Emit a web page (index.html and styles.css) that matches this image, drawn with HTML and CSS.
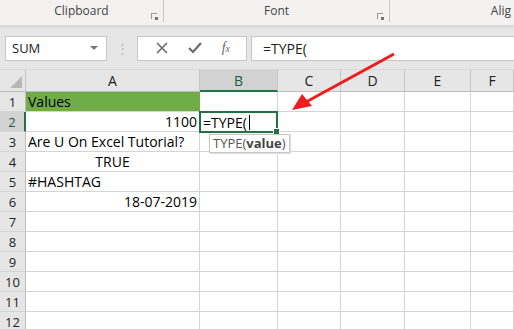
FILE: index.html
```html
<!DOCTYPE html>
<html lang="en">

<head>
    <meta charset="UTF-8">
    <title>TYPE function</title>
    <link rel="stylesheet" href="styles.css">
</head>

<body>
    <div class="ribbon">
        <div class="group group-clip">
            <span class="group-name">Clipboard</span>
            <span class="launcher"></span>
        </div>
        <div class="group group-font">
            <span class="group-name">Font</span>
            <span class="launcher"></span>
        </div>
        <div class="group group-align">
            <span class="group-name">Alig</span>
        </div>
    </div>

    <div class="fbar">
        <div class="namebox">
            <span>SUM</span>
            <span class="caret"></span>
        </div>
        <div class="dots">&#8942;</div>
        <div class="fbuttons">
            <svg width="12" height="12" viewBox="0 0 12 12"><path d="M1 1L11 11M11 1L1 11" stroke="#6a6a6a" stroke-width="1.6" fill="none"/></svg>
            <svg width="14" height="12" viewBox="0 0 14 12"><path d="M1 6L5 10L13 1" stroke="#6a6a6a" stroke-width="2.2" fill="none"/></svg>
            <span class="fx"><i>f</i><small>x</small></span>
        </div>
        <div class="finput">=TYPE(</div>
    </div>

    <div class="sheet">
        <div class="corner"><span class="tri"></span></div>
        <div class="colhead">A</div>
        <div class="colhead sel">B</div>
        <div class="colhead">C</div>
        <div class="colhead">D</div>
        <div class="colhead">E</div>
        <div class="colhead">F</div>

        <div class="rowhead">1</div>
        <div class="cell green">Values</div>
        <div class="cell"></div><div class="cell"></div><div class="cell"></div><div class="cell"></div><div class="cell"></div>

        <div class="rowhead sel">2</div>
        <div class="cell right">1100</div>
        <div class="cell active">=TYPE(<span class="cursor"></span><span class="handle"></span>
            <div class="tip">TYPE(<b>value</b>)</div>
        </div>
        <div class="cell"></div><div class="cell"></div><div class="cell"></div><div class="cell"></div>

        <div class="rowhead">3</div>
        <div class="cell">Are U On Excel Tutorial?</div>
        <div class="cell"></div><div class="cell"></div><div class="cell"></div><div class="cell"></div><div class="cell"></div>

        <div class="rowhead">4</div>
        <div class="cell center">TRUE</div>
        <div class="cell"></div><div class="cell"></div><div class="cell"></div><div class="cell"></div><div class="cell"></div>

        <div class="rowhead">5</div>
        <div class="cell">#HASHTAG</div>
        <div class="cell"></div><div class="cell"></div><div class="cell"></div><div class="cell"></div><div class="cell"></div>

        <div class="rowhead">6</div>
        <div class="cell right">18-07-2019</div>
        <div class="cell"></div><div class="cell"></div><div class="cell"></div><div class="cell"></div><div class="cell"></div>

        <div class="rowhead">7</div>
        <div class="cell"></div><div class="cell"></div><div class="cell"></div><div class="cell"></div><div class="cell"></div><div class="cell"></div>
        <div class="rowhead">8</div>
        <div class="cell"></div><div class="cell"></div><div class="cell"></div><div class="cell"></div><div class="cell"></div><div class="cell"></div>
        <div class="rowhead">9</div>
        <div class="cell"></div><div class="cell"></div><div class="cell"></div><div class="cell"></div><div class="cell"></div><div class="cell"></div>
        <div class="rowhead">10</div>
        <div class="cell"></div><div class="cell"></div><div class="cell"></div><div class="cell"></div><div class="cell"></div><div class="cell"></div>
        <div class="rowhead">11</div>
        <div class="cell"></div><div class="cell"></div><div class="cell"></div><div class="cell"></div><div class="cell"></div><div class="cell"></div>
        <div class="rowhead">12</div>
        <div class="cell"></div><div class="cell"></div><div class="cell"></div><div class="cell"></div><div class="cell"></div><div class="cell"></div>
    </div>

    <svg class="arrow" width="514" height="329" viewBox="0 0 514 329">
        <path d="M394 54L306 102" stroke="#ee1c1c" stroke-width="3" fill="none"/>
        <path d="M292 110L302 94L312 106Z" fill="#ee1c1c"/>
    </svg>
</body>

</html>
```

FILE: styles.css
```css
body {
    margin: 0;
    width: 514px;
    height: 329px;
    overflow: hidden;
    position: relative;
    background: #ffffff;
    font-family: "Open Sans", "Liberation Sans", sans-serif;
    color: #000;
}

.ribbon {
    height: 25px;
    background: #f3f2f1;
    display: flex;
    border-bottom: 1px solid #dadada;
    box-shadow: 0 1px 2px #d0d0d0;
    position: relative;
}

.group {
    position: relative;
    display: flex;
    justify-content: center;
    align-items: flex-end;
    padding-bottom: 3px;
    box-sizing: border-box;
    font-size: 12px;
    color: #444;
}

.group-clip {
    width: 164px;
    border-right: 1px solid #c8c8c8;
    height: 22px;
}

.group-font {
    width: 226px;
    border-right: 1px solid #c8c8c8;
    height: 22px;
}

.group-align {
    flex: 1;
    justify-content: flex-end;
    padding-right: 3px;
    height: 22px;
}

.launcher {
    position: absolute;
    right: 6px;
    bottom: 3px;
    width: 5px;
    height: 5px;
    border-left: 1px solid #999;
    border-top: 1px solid #999;
}

.launcher::after {
    content: "";
    position: absolute;
    right: -1px;
    bottom: -1px;
    width: 3px;
    height: 3px;
    background: #777;
}

.fbar {
    height: 43px;
    background: #e6e6e6;
    display: flex;
    align-items: center;
    padding: 0 0 0 5px;
    box-sizing: border-box;
    padding-top: 1px;
}

.namebox {
    width: 102px;
    height: 25px;
    box-sizing: border-box;
    background: #fff;
    border: 1px solid #c6c6c6;
    display: flex;
    align-items: center;
    justify-content: space-between;
    padding: 0 8px 0 6px;
    font-size: 13px;
    color: #222;
}

.caret {
    width: 0;
    height: 0;
    border-left: 4px solid transparent;
    border-right: 4px solid transparent;
    border-top: 4px solid #777;
}

.dots {
    width: 30px;
    text-align: center;
    color: #b8b8b8;
    font-size: 13px;
}

.fbuttons {
    width: 110px;
    height: 25px;
    box-sizing: border-box;
    background: #fff;
    border: 1px solid #c6c6c6;
    display: flex;
    align-items: center;
    justify-content: space-around;
    padding: 0 6px 0 8px;
}

.fx {
    font-family: "Liberation Serif", serif;
    color: #6a6a6a;
    font-size: 14px;
}

.fx small {
    font-size: 10px;
    font-style: italic;
}

.finput {
    flex: 1;
    margin-left: 4px;
    height: 25px;
    box-sizing: border-box;
    background: #fff;
    border: 1px solid #c6c6c6;
    border-right: none;
    display: flex;
    align-items: center;
    padding-left: 11px;
    font-size: 14px;
    color: #222;
}

.sheet {
    display: grid;
    grid-template-columns: 26px 174px 78px 63px 64px 66px 43px;
    grid-template-rows: 23px repeat(12, 20px);
    background: #fff;
}

.corner {
    background: #e6e6e6;
    border-top: 1px solid #d9d9d9;
    border-right: 1px solid #c6c6c6;
    border-bottom: 1px solid #bdbdbd;
    position: relative;
}

.tri {
    position: absolute;
    right: 3px;
    bottom: 3px;
    width: 0;
    height: 0;
    border-left: 12px solid transparent;
    border-bottom: 12px solid #b7b7b7;
}

.colhead {
    background: #e6e6e6;
    border-top: 1px solid #d9d9d9;
    border-right: 1px solid #c6c6c6;
    border-bottom: 1px solid #bdbdbd;
    display: flex;
    align-items: center;
    justify-content: center;
    font-size: 14px;
    color: #222;
}

.colhead.sel {
    background: #d2d2d2;
    border-bottom: 2px solid #217346;
    color: #1c5d36;
}

.rowhead {
    background: #e6e6e6;
    border-right: 1px solid #bdbdbd;
    border-bottom: 1px solid #d4d4d4;
    display: flex;
    align-items: center;
    justify-content: center;
    font-size: 13px;
    color: #222;
}

.rowhead.sel {
    background: #d2d2d2;
    border-right: 2px solid #217346;
    color: #1c5d36;
}

.cell {
    border-right: 1px solid #d4d4d4;
    border-bottom: 1px solid #d4d4d4;
    display: flex;
    align-items: center;
    padding: 0 2px;
    font-size: 14px;
    white-space: nowrap;
    position: relative;
    min-width: 0;
}

.cell.green {
    background: #70ad47;
    border-right-color: #70ad47;
}

.cell.right {
    justify-content: flex-end;
}

.cell.center {
    justify-content: center;
}

.cell.active {
    border: 2px solid #217346;
    margin: -1px 0 -1px -1px;
    padding-left: 2px;
    z-index: 2;
    overflow: visible;
}

.cursor {
    display: inline-block;
    width: 1px;
    height: 15px;
    background: #000;
    margin-left: 2px;
}

.handle {
    position: absolute;
    right: -4px;
    bottom: -4px;
    width: 5px;
    height: 5px;
    background: #217346;
    border: 1px solid #fff;
}

.tip {
    position: absolute;
    left: 8px;
    top: 21px;
    background: #fff;
    border: 1px solid #c6c6c6;
    padding: 0 3px;
    height: 17px;
    line-height: 16px;
    font-size: 13px;
    color: #555;
    box-shadow: 1px 1px 1px #e0e0e0;
}

.tip b {
    color: #444;
}

.arrow {
    position: absolute;
    left: 0;
    top: 0;
    pointer-events: none;
}
```
